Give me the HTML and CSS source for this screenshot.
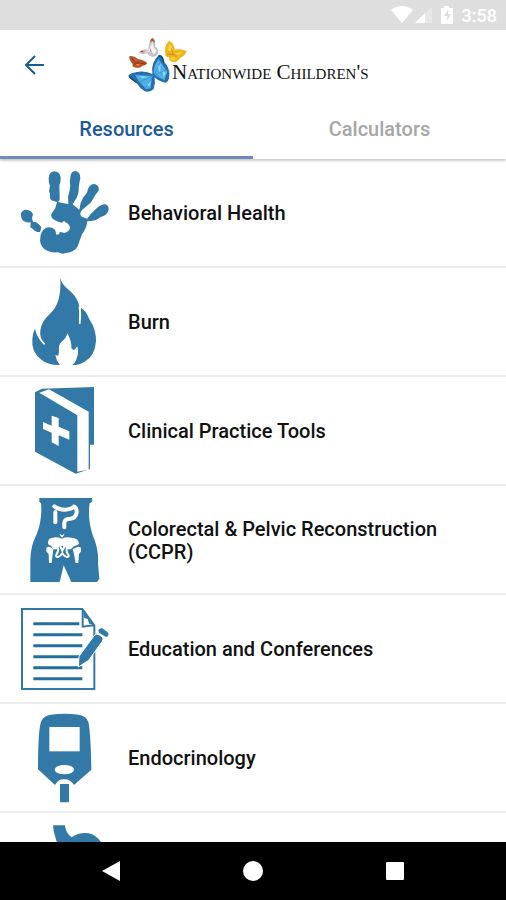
FILE: index.html
```html
<!DOCTYPE html>
<html lang="en">
<head>
  <meta charset="UTF-8">
  <meta name="viewport" content="width=device-width, initial-scale=1">
  <title>Nationwide Children's</title>
  <link rel="stylesheet" href="styles.css">
</head>
<body>
  <div class="status">
    <svg class="status-icons" viewBox="0 0 66 20" aria-hidden="true">
      <path fill="#fff" d="M0 5Q11-3 22 5L11 18Z"/>
      <path fill="#e8e8e8" d="M24 18L41 2V18Z"/>
      <path fill="#fff" d="M24 18L34 8V18Z"/>
      <path fill="#fff" d="M53 1h5v2h4v16H50V3h3z"/>
      <path fill="#dedede" d="M57 5l-4 6h3v5l4-7h-3z"/>
    </svg>
    <span>3:58</span>
  </div>

  <header class="header">
    <button class="back" aria-label="Back">
      <svg viewBox="0 0 20 20"><path d="M19 10H2M10 1L1 10L10 19"/></svg>
    </button>
    <div class="logo">
      <svg class="butterflies" viewBox="0 0 180 168" aria-hidden="true">
        <!-- white -->
        <path fill="#c4c2c6" d="M62 30Q62 10 73 3Q83 10 81 28Q92 36 91 49Q82 64 67 58Q60 54 58 49Q40 55 33 46Q46 34 60 38Z"/>
        <path fill="#f3f2f3" d="M67 29L73 15L77 31L86 42L78 52L68 43L50 47L62 40Z"/>
        <path fill="#b75931" d="M66 16Q67 6 73 2Q81 7 81 17L73 12ZM33 46L44 40L47 46ZM65 33L72 44L67 42Z"/>
        <!-- yellow -->
        <path fill="#efb51b" d="M112 49Q107 28 123 11Q139 18 140 38Q161 34 176 42Q172 56 157 62Q147 77 134 75Q121 72 124 61Q109 61 112 49Z"/>
        <path fill="#ffd43f" d="M120 42L123 20Q134 25 134 42ZM138 49L164 44L153 54ZM128 61L139 60L143 66L134 71Z"/>
        <path fill="none" stroke="#c47b12" stroke-width="2" d="M117 51L137 53L146 59M130 34L136 53"/>
        <!-- orange -->
        <path fill="#b65226" d="M4 57Q18 55 31 67Q47 68 58 79Q53 86 43 86Q40 94 25 92Q10 90 14 81Q3 70 4 57Z"/>
        <path fill="none" stroke="#8a3d1f" stroke-width="3" d="M9 64L31 77L52 81M18 82L31 77"/>
        <path fill="#e7894c" d="M13 64L24 69L28 75ZM23 82L37 81L29 87Z"/>
        <!-- blue -->
        <path fill="#256fae" d="M73 105Q69 77 93 53Q106 52 109 76Q126 92 124 117Q122 137 111 137Q94 134 80 121Q83 139 77 156Q65 168 50 163Q36 155 26 139Q4 125 1 118Q1 110 18 107Q50 98 73 111Z"/>
        <path fill="#4fb0e8" d="M77 108Q77 83 92 66L104 84L118 104L109 130L84 116ZM72 117L21 113L32 132L54 157L68 154Z"/>
        <path fill="#8dd8f8" d="M88 88L98 82L96 108ZM104 100L113 108L106 122ZM30 117L62 119L45 124ZM54 145L68 130L66 147Z"/>
        <path fill="none" stroke="#1d3f63" stroke-width="4" d="M91 58Q105 54 107 78M4 119L26 137"/>
        <path fill="none" stroke="#3a86c4" stroke-width="2" d="M79 114L97 74M79 116L116 98M76 116L22 114M76 116L50 156M76 116L36 134"/>
      </svg>
      <span class="wordmark">Nationwide Children's</span>
    </div>
  </header>

  <nav class="tabs">
    <button class="tab active">Resources</button>
    <button class="tab">Calculators</button>
  </nav>

  <main class="list">
    <a class="row" href="#">
      <svg class="icon" viewBox="60 -3 270 321">
        <path d="M146 54Q147 35 164 34Q181 36 182 54Q183 66 178 76L179 110Q181 119 174 126L191 130L205 132L204 111Q209 94 211 78Q208 65 211 52Q212 34 226 33Q241 36 241 54Q238 67 236 84Q238 97 231 112L218 133L238 149L242 128L250 112L261 98Q263 86 269 78Q278 69 289 74Q300 81 295 94Q284 106 279 117L272 128L247 149Q238 158 243 169L261 176Q276 157 290 145Q304 132 317 133Q329 139 325 152Q320 166 304 170Q290 181 274 183L262 184Q260 204 246 223Q238 244 234 257Q224 276 198 279L187 281L174 277Q148 279 134 268Q117 253 121 233Q122 214 136 205Q149 198 163 207Q168 212 169 224L177 223L180 215L193 219Q210 215 210 202Q207 191 196 187L192 182L186 188Q174 187 165 181Q151 174 154 162L166 144L171 126L154 121Q148 115 150 101L147 94L150 77Q145 66 146 54Z"/>
        <path d="M62 163Q65 149 79 149Q94 150 99 163L96 175L99 185Q113 184 124 202L120 216Q106 217 98 206L91 202L92 187Q73 189 65 176Z"/>
      </svg>
      <span>Behavioral Health</span>
    </a>
    <a class="row" href="#">
      <svg class="icon" viewBox="60 0 270 321">
        <path d="M181 31Q185 50 211 70Q234 91 238 117L237 165Q244 151 243 120Q257 126 269 155Q289 184 288 220Q285 264 254 281Q238 291 217 291Q229 280 230 270Q237 256 232 235L222 247L214 241Q216 221 202 196Q198 212 184 222Q174 233 177 248L175 263L166 261L171 278L180 291Q145 292 125 276Q93 253 97 213Q97 196 106 180Q111 207 134 229Q118 213 121 187Q124 160 150 137Q185 108 181 31Z"/>
        <path class="line" d="M238 116Q244 142 239 168M107 180Q113 209 134 229"/>
      </svg>
      <span>Burn</span>
    </a>
    <a class="row" href="#">
      <svg class="icon" viewBox="60 -3 270 321">
        <path d="M105 43L126 32L282 27V200H270V273L227 287L105 221Z"/>
        <path class="cut" d="M118 44L147 34L266 101V275L232 281V112Z"/>
        <path class="cut" d="M155 113L176 120V146L208 160V185L176 172V204L155 193V164L129 153V132L155 143Z"/>
      </svg>
      <span>Clinical Practice Tools</span>
    </a>
    <a class="row" href="#">
      <svg class="icon" viewBox="60 0 270 321">
        <path d="M118 36H276V47L269 52Q262 98 278 147Q297 190 294 233L298 278L291 288H214L191 238L179 288H91V221Q92 179 109 147Q128 99 123 52L118 48Z"/>
        <!-- colon -->
        <path class="gut" d="M163 61Q174 71 195 71Q213 71 222 62Q231 66 230 80Q227 97 211 98Q194 98 193 110V124"/>
        <path class="gut" d="M166 78V109"/>
        <!-- pelvis and hips -->
        <path class="cut" d="M178 143L186 148L194 143L188 154H184ZM144 170Q144 156 158 155Q172 152 185 158Q199 152 214 155Q235 156 237 171Q235 179 224 179L212 190H200L194 180H178L172 190H160L153 179Q144 177 144 170Z"/>
        <path class="bone" d="M174 184Q176 197 169 206Q166 213 174 213Q182 211 187 202Q192 211 200 213Q209 213 205 206Q197 197 201 184M180 180L187 194L194 180"/>
        <path class="cut" d="M139 185Q147 179 153 185L160 189L158 205L155 231H147L146 205L139 196ZM243 185Q234 179 228 185L218 189L222 205L227 231H235L237 205L243 196Z"/>
      </svg>
      <span>Colorectal &amp; Pelvic Reconstruction (CCPR)</span>
    </a>
    <a class="row" href="#">
      <svg class="icon" viewBox="60 -3 270 321">
        <path class="outline" d="M66 39H247L283 88V279H66ZM248 40V92L282 88"/>
        <path class="rule" d="M100 83H238M100 116H247M100 149H247M100 182H247M100 215H247M100 248H247"/>
        <path d="M248 43L281 86L268 84L263 69L253 66Z"/>
        <path stroke="#fff" stroke-width="3" d="M283 118Q288 112 297 116L307 123Q312 129 307 136L266 193L235 213L237 181Z"/>
        <path d="M295 104Q298 95 307 97L323 109Q329 116 321 123L314 121L297 110Z"/>
      </svg>
      <span>Education and Conferences</span>
    </a>
    <a class="row" href="#">
      <svg class="icon" viewBox="60 -6 270 321">
        <path d="M153 26Q193 21 235 26Q258 28 265 48Q272 78 274 191L222 237Q211 219 192 220Q176 218 165 237L114 190Q114 75 123 47Q130 29 153 26ZM180 234H207V289H180Z"/>
        <path class="cut" d="M148 63H239V136H148Z"/>
        <ellipse class="cut" cx="193" cy="191" rx="29" ry="14"/>
      </svg>
      <span>Endocrinology</span>
    </a>
    <a class="row" href="#" aria-label="Next resource">
      <svg class="icon" viewBox="60 321 270 321">
        <path d="M159 358H195Q197 382 215 394Q239 377 267 382Q294 389 307 416V500Q270 550 200 530L220 480Q176 433 167 397Q160 377 159 358Z"/>
      </svg>
    </a>
  </main>

  <footer class="navbar">
    <button aria-label="System back"><svg viewBox="0 0 20 20"><path d="M1 10L19 0V20Z"/></svg></button>
    <button aria-label="Home"><svg viewBox="0 0 20 20"><circle cx="10" cy="10" r="10"/></svg></button>
    <button aria-label="Recent apps"><svg viewBox="0 0 20 20"><rect x="1" y="1" width="18" height="18" rx="1"/></svg></button>
  </footer>
</body>
</html>
```
FILE: styles.css
```css
* {
  box-sizing: border-box;
}
body {
  margin: 0;
  height: 100vh;
  display: flex;
  flex-direction: column;
  font-family: Roboto, sans-serif;
  font-weight: 500;
  background-color: #fff;
  color: #111;
}
button {
  border: 0;
  padding: 0;
  background: none;
  font: inherit;
}
svg {
  display: block;
  flex: none;
}
.status {
  flex: none;
  height: 30px;
  padding: 0 9px;
  display: flex;
  align-items: center;
  justify-content: flex-end;
  gap: 5px;
  background-color: #dedede;
  color: #fff;
  font-size: 18px;
}
.status-icons {
  width: 66px;
  height: 20px;
}
.header {
  flex: none;
  height: 70px;
  padding: 0 25px;
  display: flex;
  align-items: center;
  gap: 83px;
}
.back svg {
  width: 20px;
  height: 20px;
  fill: none;
  stroke: #185b9c;
  stroke-width: 2;
}
.logo {
  display: flex;
  align-items: center;
}
.butterflies {
  width: 60px;
  height: 56px;
  margin-right: -16px;
}
.wordmark {
  padding-top: 14px;
  font-family: "Liberation Serif", serif;
  font-weight: 400;
  font-size: 21px;
  line-height: 24px;
  font-variant: small-caps;
  white-space: nowrap;
}
.tabs {
  flex: none;
  height: 59px;
  display: flex;
  box-shadow: 0 2px 2px #ccc;
}
.tab {
  flex: 1;
  padding-top: 2px;
  border-bottom: 3px solid transparent;
  font-size: 20px;
  color: #a6a6a6;
}
.tab.active {
  color: #185b9c;
  border-color: #6f8cb8;
}
.list {
  flex: 1;
  min-height: 0;
  overflow: hidden;
}
.row {
  height: 109px;
  padding: 0 20px;
  display: flex;
  align-items: center;
  gap: 18px;
  border-bottom: 2px solid #ececec;
  color: inherit;
  text-decoration: none;
  font-size: 20px;
  line-height: 23px;
}
.row span {
  padding-top: 2px;
}
.icon {
  width: 90px;
  height: 107px;
  fill: #3279a7;
}
.icon .cut {
  fill: #fff;
}
.icon .line {
  fill: none;
  stroke: #fff;
  stroke-width: 5;
}
.icon .gut {
  fill: none;
  stroke: #fff;
  stroke-width: 12;
  stroke-linecap: round;
}
.icon .bone {
  fill: none;
  stroke: #fff;
  stroke-width: 6;
}
.icon .outline {
  fill: none;
  stroke: #3279a7;
  stroke-width: 6;
}
.icon .rule {
  fill: none;
  stroke: #24709d;
  stroke-width: 9;
}
.navbar {
  flex: none;
  height: 58px;
  padding: 0 40px;
  display: flex;
  align-items: center;
  background-color: #000;
}
.navbar button {
  flex: 1;
  display: flex;
  justify-content: center;
}
.navbar svg {
  width: 20px;
  height: 20px;
  fill: #fff;
}
```
